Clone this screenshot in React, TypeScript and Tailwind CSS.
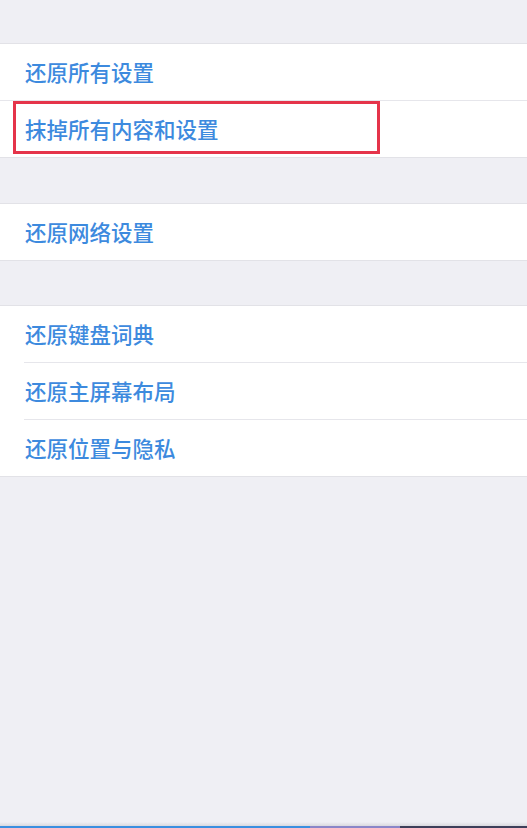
import type { ReactElement } from "react";

const FONT = { fontFamily: '"Noto Sans CJK SC", "Noto Sans", sans-serif' };

function Row({ label, highlight }: { label: string; highlight?: boolean }): ReactElement {
  return (
    <div className="relative flex h-[56px] items-center pl-[25px]">
      <span className="text-[21.5px] font-medium leading-none text-[#3d8ade]">{label}</span>
      {highlight ? (
        <div className="pointer-events-none absolute left-[13px] top-0 h-[53px] w-[367px] border-[3px] border-[#e5344a]" />
      ) : null}
    </div>
  );
}

function Section({ children }: { children: ReactElement[] | ReactElement }): ReactElement {
  return <div className="border-y border-[#e2e2e7] bg-white">{children}</div>;
}

export default function App(): ReactElement {
  return (
    <div className="flex min-h-[828px] flex-col bg-[#efeff4]" style={FONT}>
      <div className="h-[43px]" />
      <Section>
        <Row label="还原所有设置" />
        <div className="h-px bg-[#e6e6eb]" />
        <Row label="抹掉所有内容和设置" highlight />
      </Section>
      <div className="h-[45px]" />
      <Section>
        <Row label="还原网络设置" />
      </Section>
      <div className="h-[44px]" />
      <Section>
        <Row label="还原键盘词典" />
        <div className="ml-[24px] h-px bg-[#e6e6eb]" />
        <Row label="还原主屏幕布局" />
        <div className="ml-[24px] h-px bg-[#e6e6eb]" />
        <Row label="还原位置与隐私" />
      </Section>
      <div className="flex-1" />
      <div className="h-[4px] bg-gradient-to-b from-[#efeff4] to-[#d9d9de]" />
      <div className="flex h-[2px]">
        <div className="w-[310px] bg-[#3b8fe0]" />
        <div className="w-[90px] bg-[#8a86c8]" />
        <div className="flex-1 bg-[#3e3f5a]" />
      </div>
    </div>
  );
}
